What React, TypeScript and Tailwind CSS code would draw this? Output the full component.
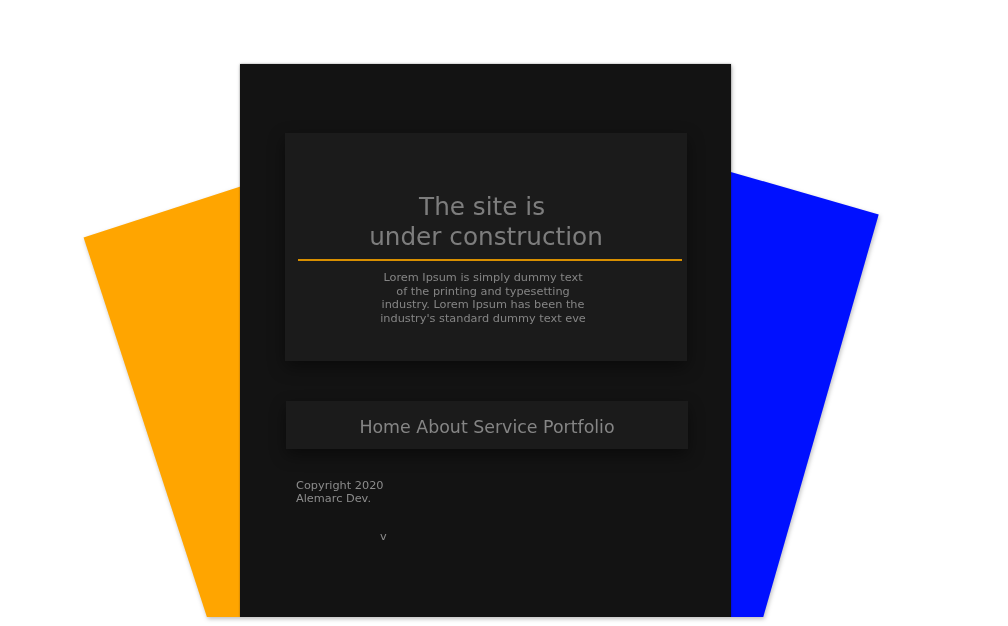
export default function App() {
  return (
    <div className="h-[626px] w-[1008px] overflow-hidden bg-white font-['DejaVu_Sans',sans-serif]">
      {/* drop shadow is on the wrapper so the clipped bottom edge gets one too */}
      <div className="[filter:drop-shadow(1px_2px_2px_rgba(0,0,0,0.25))]">
        <div className="relative h-[617px] overflow-hidden pt-[64px]">
          {/* back cards */}
          <div className="absolute left-[157px] top-[148px] h-[553px] w-[491px] rotate-[-18deg] bg-[#ffa500]" />
          <div className="absolute left-[321px] top-[136px] h-[553px] w-[491px] rotate-[16deg] bg-[#0010ff]" />

          {/* front card */}
          <div className="relative ml-[240px] flex h-[553px] w-[491px] flex-col bg-[#131313] pt-[69px] shadow-[0_0_2px_rgba(0,0,0,0.35)]">
            <div className="ml-[45px] flex h-[228px] w-[402px] flex-col items-center bg-[#1b1b1b] px-[13px] pt-[59px] shadow-[0_6px_16px_rgba(0,0,0,0.45)]">
              <h1 className="text-center text-[24.7px] leading-[30px] text-[#7d7d7d]">
                The site is&nbsp;
                <br />
                under construction
              </h1>
              <div className="mt-[7px] h-[2px] w-[384px] self-start bg-[#d88f00]" />
              <p className="mr-[6px] mt-[10px] w-[212px] text-center text-[11.3px] leading-[13.7px] text-[#858585]">
                Lorem Ipsum is simply dummy text of the printing and typesetting industry. Lorem Ipsum has been the
                industry's standard dummy text eve
              </p>
            </div>

            <nav className="ml-[46px] mt-[40px] flex h-[48px] w-[402px] items-center justify-center bg-[#1b1b1b] pt-[4px] text-[17.4px] text-[#858585] shadow-[0_6px_16px_rgba(0,0,0,0.45)]">
              <span>Home About Service Portfolio</span>
            </nav>

            <div className="ml-[56px] mt-[30px] text-[11.3px] leading-[13px] text-[#8c8c8c]">
              <p>Copyright 2020</p>
              <p>Alemarc Dev.</p>
            </div>

            <div className="ml-[140px] mt-[25px] text-[11.3px] leading-[13px] text-[#8c8c8c]">v</div>
          </div>
        </div>
      </div>
    </div>
  );
}
